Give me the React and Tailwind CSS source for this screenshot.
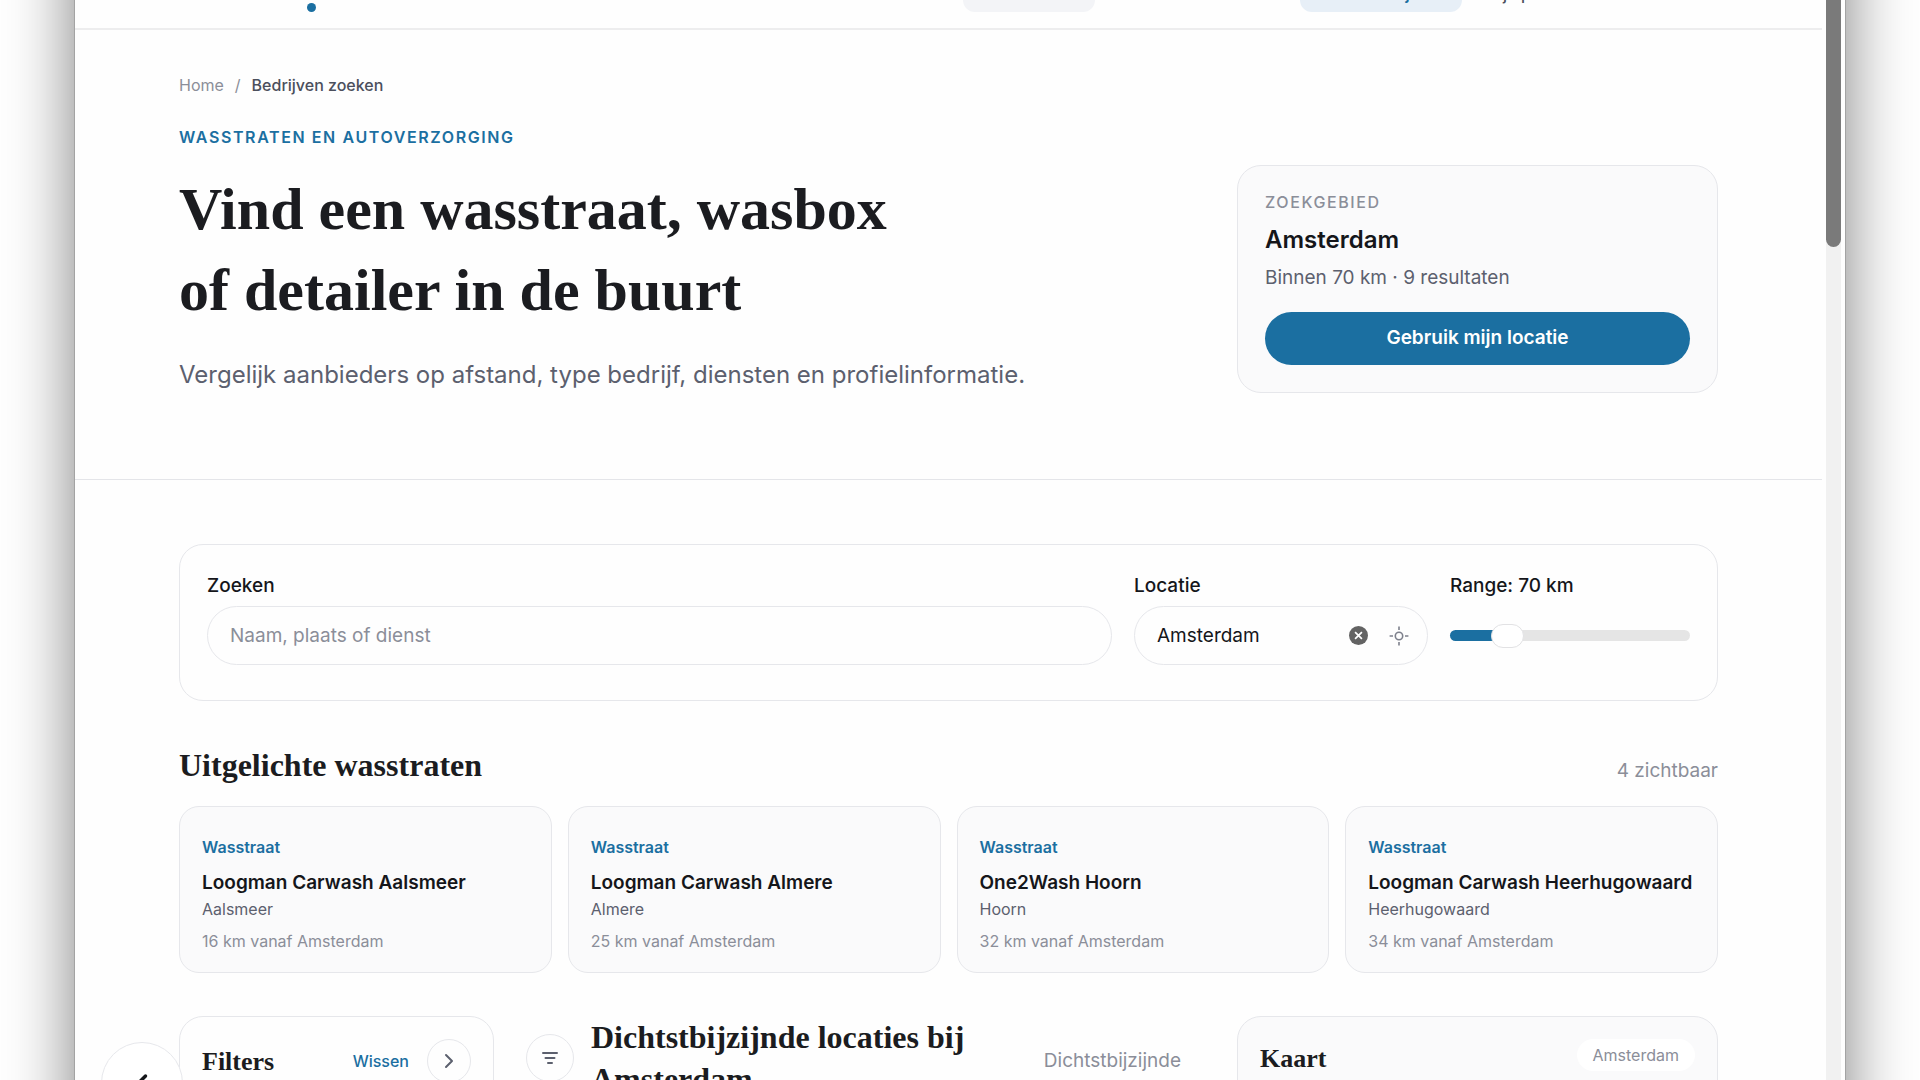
import { useState } from 'react';
import { ChevronLeft, ChevronRight } from 'lucide-react';

const featured = [
  { id: 1, type: 'Wasstraat', name: 'Loogman Carwash Aalsmeer', city: 'Aalsmeer', km: 16 },
  { id: 2, type: 'Wasstraat', name: 'Loogman Carwash Almere', city: 'Almere', km: 25 },
  { id: 3, type: 'Wasstraat', name: 'One2Wash Hoorn', city: 'Hoorn', km: 32 },
  { id: 4, type: 'Wasstraat', name: 'Loogman Carwash Heerhugowaard', city: 'Heerhugowaard', km: 34 },
];

const RANGE_MIN = 25;
const RANGE_MAX = 250;

function Header() {
  return (
    <header className="flex h-[126px] items-end border-b-2 border-[#ededee] px-[104px] pb-4">
      <div className="flex w-[137px] justify-end">
        <span className="size-[9px] rounded-full bg-[#1b6fa1]" />
      </div>
      <nav className="ml-auto flex items-center pr-[148px] text-base font-medium text-[#4b4f5c]">
        <a href="#wasstraten" className="flex h-9 w-[132px] items-center justify-center rounded-xl bg-[#f3f4f7]">Wasstraten</a>
        <a href="#bedrijven" className="ml-[205px] flex h-9 w-[162px] items-center justify-center rounded-xl bg-[#e7eff7] font-semibold text-[#1b6fa1]">Voor bedrijven</a>
        <a href="#profiel" className="flex h-9 items-center pl-[22px]">Mijn profiel</a>
      </nav>
    </header>
  );
}

function Hero({ place, range }) {
  return (
    <section className="border-b border-[#e4e5e9] px-[104px] pt-[43px] pb-[86px]">
      <nav aria-label="Kruimelpad" className="flex gap-[11px] text-base text-[#8b8e99]">
        <a href="#home">Home</a>
        <span>/</span>
        <span className="font-medium text-[#4b4f5c]">Bedrijven zoeken</span>
      </nav>
      <div className="mt-7 flex items-end justify-between">
        <div>
          <p className="text-base font-semibold tracking-[1.6px] text-[#1b6fa1]">WASSTRATEN EN AUTOVERZORGING</p>
          <h1 className="mt-5 font-['Liberation_Serif',serif] text-[60px] leading-[81px] font-bold text-[#1b1c20]">
            Vind een wasstraat, wasbox
            <br />
            of detailer in de buurt
          </h1>
          <p className="mt-[26px] text-2xl leading-9 text-[#5c606e]">
            Vergelijk aanbieders op afstand, type bedrijf, diensten en profielinformatie.
          </p>
        </div>
        <div className="w-[481px] rounded-3xl border border-[#e6e7eb] bg-[#fafafb] px-[27px] pt-6 pb-[27px]">
          <p className="text-base font-medium tracking-[1.6px] text-[#8b8e99]">ZOEKGEBIED</p>
          <p className="mt-2 text-2xl leading-9 font-semibold text-[#15161a]">{place}</p>
          <p className="mt-1.5 text-[19px] leading-7 text-[#5c606e]">Binnen {range} km · 9 resultaten</p>
          <button type="button" className="mt-5 h-[53px] w-full rounded-full bg-[#1b6fa1] text-[19px] font-semibold text-white">
            Gebruik mijn locatie
          </button>
        </div>
      </div>
    </section>
  );
}

function SearchBar({ place, setPlace, range, setRange }) {
  const [query, setQuery] = useState('');
  const pct = ((range - RANGE_MIN) / (RANGE_MAX - RANGE_MIN)) * 100;

  return (
    <form
      onSubmit={(e) => e.preventDefault()}
      className="grid grid-cols-[1fr_294px_240px] gap-[22px] rounded-3xl border border-[#e6e7eb] px-[27px] pt-[27px] pb-[35px] text-[19px] leading-7 text-[#15161a]"
    >
      <div>
        <label htmlFor="query" className="font-medium">Zoeken</label>
        <input
          id="query"
          value={query}
          onChange={(e) => setQuery(e.target.value)}
          placeholder="Naam, plaats of dienst"
          className="mt-1.5 block h-[59px] w-full rounded-full border border-[#e6e7eb] px-[22px] outline-none placeholder:text-[#8b8e99]"
        />
      </div>
      <div>
        <label htmlFor="place" className="font-medium">Locatie</label>
        <div className="mt-1.5 flex h-[59px] items-center rounded-full border border-[#e6e7eb] pr-[18px] pl-[22px]">
          <input id="place" value={place} onChange={(e) => setPlace(e.target.value)} className="w-0 flex-1 outline-none" />
          <button type="button" aria-label="Locatie wissen" onClick={() => setPlace('')}>
            <svg viewBox="0 0 20 20" className="size-[19px]">
              <circle cx="10" cy="10" r="10" fill="#636363" />
              <path d="M6.4 6.4l7.2 7.2M13.6 6.4l-7.2 7.2" stroke="#fff" strokeWidth="1.8" />
            </svg>
          </button>
          <button type="button" aria-label="Mijn locatie" className="ml-[21px]">
            <svg viewBox="0 0 20 20" className="size-5" fill="none" stroke="#7d808c" strokeWidth="1.6">
              <circle cx="10" cy="10" r="3.7" />
              <path d="M10 .6v3.4M10 16v3.4M.6 10h3.4M16 10h3.4" />
            </svg>
          </button>
        </div>
      </div>
      <div>
        <label htmlFor="range" className="font-medium">Range: {range} km</label>
        <div className="mt-1.5 flex h-[59px] items-center">
          <input
            id="range"
            type="range"
            min={RANGE_MIN}
            max={RANGE_MAX}
            value={range}
            onChange={(e) => setRange(Number(e.target.value))}
            style={{ backgroundImage: `linear-gradient(to right, #1b6fa1 ${pct}%, #e5e5e5 ${pct}%)` }}
            className="h-[11px] w-full appearance-none rounded-full outline-none [&::-webkit-slider-thumb]:h-6 [&::-webkit-slider-thumb]:w-[33px] [&::-webkit-slider-thumb]:appearance-none [&::-webkit-slider-thumb]:rounded-full [&::-webkit-slider-thumb]:border [&::-webkit-slider-thumb]:border-[#e2e2e4] [&::-webkit-slider-thumb]:bg-white"
          />
        </div>
      </div>
    </form>
  );
}

function Featured() {
  return (
    <section className="mt-11">
      <div className="flex items-end justify-between">
        <h2 className="font-['Liberation_Serif',serif] text-[32px] leading-10 font-bold text-[#1b1c20]">Uitgelichte wasstraten</h2>
        <span className="text-[19px] leading-7 text-[#8b8e99]">{featured.length} zichtbaar</span>
      </div>
      <div className="mt-[21px] grid grid-cols-4 gap-4">
        {featured.map((f) => (
          <a key={f.id} href={`#${f.city}`} className="block rounded-[20px] border border-[#e6e7eb] bg-[#fafafb] px-[22px] pt-[28px] pb-[19px] text-base whitespace-nowrap">
            <p className="font-semibold text-[#1b6fa1]">{f.type}</p>
            <p className="mt-2.5 text-[19px] leading-7 font-semibold text-[#15161a]">{f.name}</p>
            <p className="text-[#5c606e]">{f.city}</p>
            <p className="mt-2 text-[#8b8e99]">{f.km} km vanaf Amsterdam</p>
          </a>
        ))}
      </div>
    </section>
  );
}

function Results({ place }) {
  return (
    <section className="mt-[43px] grid h-[400px] grid-cols-[315px_1fr_481px] gap-8">
      <aside className="rounded-3xl border border-[#e6e7eb] px-[22px] pt-[22px]">
        <div className="flex items-center">
          <h2 className="font-['Liberation_Serif',serif] text-[26px] font-bold text-[#1b1c20]">Filters</h2>
          <button type="button" className="ml-auto text-base font-medium text-[#1b6fa1]">Wissen</button>
          <button type="button" aria-label="Filters inklappen" className="ml-[18px] flex size-11 items-center justify-center rounded-full border border-[#e6e7eb] text-[#5c606e]">
            <ChevronRight size={24} strokeWidth={2} />
          </button>
        </div>
      </aside>

      <div className="flex items-start pr-6">
        <button type="button" aria-label="Filters" className="mt-[18px] flex size-12 shrink-0 items-center justify-center rounded-full border border-[#e6e7eb]">
          <svg viewBox="0 0 16 14" className="h-3.5 w-4" fill="none" stroke="#5c606e" strokeWidth="2" strokeLinecap="round">
            <path d="M1 2h14M3.5 7h9M6 12h4" />
          </svg>
        </button>
        <h2 className="ml-[17px] w-[400px] font-['Liberation_Serif',serif] text-[32px] leading-[42px] font-bold text-[#1b1c20]">
          Dichtstbijzijnde locaties bij {place}
        </h2>
        <span className="mt-[31px] ml-auto text-[19px] leading-7 text-[#8b8e99]">Dichtstbijzijnde</span>
      </div>

      <aside className="rounded-3xl border border-[#e6e7eb] bg-[#fafafb] px-[22px] pt-[22px]">
        <div className="flex items-center justify-between">
          <h2 className="font-['Liberation_Serif',serif] text-[26px] font-bold text-[#1b1c20]">Kaart</h2>
          <span className="-mt-2 rounded-full bg-white px-4 py-1 text-base text-[#8b8e99]">{place}</span>
        </div>
      </aside>
    </section>
  );
}

export default function App() {
  const [place, setPlace] = useState('Amsterdam');
  const [range, setRange] = useState(70);

  return (
    <div className="h-screen overflow-hidden bg-white font-[Inter,sans-serif]">
      <div className="mx-[74px] -mt-24 flex border-x border-[#a3a3a3] bg-[#fefefe] shadow-[0_0_64px_rgba(0,0,0,0.5)]">
        <div className="min-w-0 flex-1">
          <Header />
          <Hero place={place} range={range} />
          <main className="px-[104px] pt-16">
            <SearchBar place={place} setPlace={setPlace} range={range} setRange={setRange} />
            <Featured />
            <Results place={place} />
          </main>
        </div>
        {/* scroll track */}
        <div aria-hidden="true" className="mx-1 w-[15px] bg-[#f1f1f1]">
          <div className="h-[343px] rounded-full bg-[#7a7a7a]" />
        </div>
      </div>

      <button type="button" aria-label="Vorige" className="fixed -bottom-11 left-[101px] flex size-[82px] items-center justify-center rounded-full border border-[#e6e7eb] bg-white text-[#15161a]">
        <ChevronLeft size={28} strokeWidth={3} />
      </button>
    </div>
  );
}
